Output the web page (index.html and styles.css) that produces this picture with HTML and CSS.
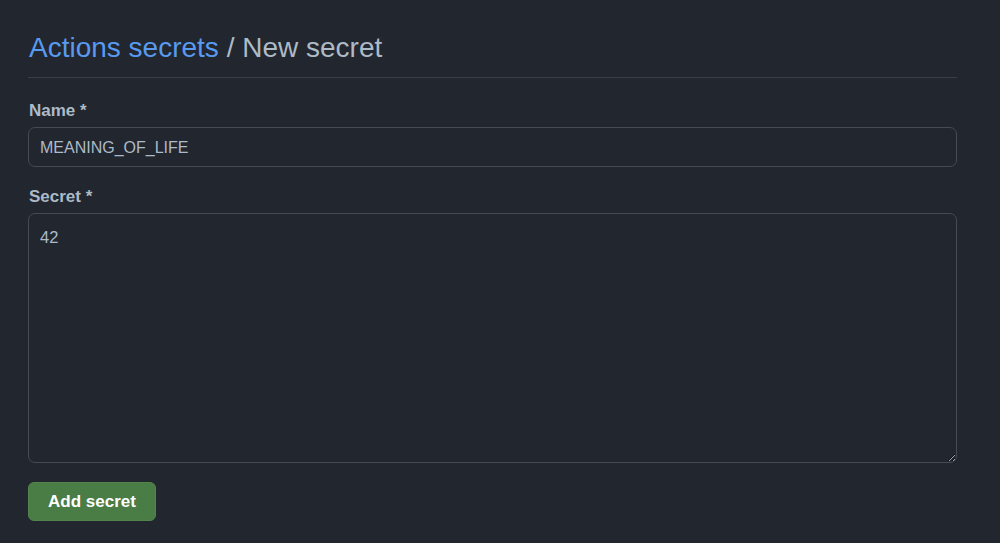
FILE: index.html
```html
<!DOCTYPE html>
<html>
<head>
<meta charset="utf-8">
<link rel="stylesheet" href="styles.css">
</head>
<body>
<main class="page">
  <h1 class="title"><a class="crumb" href="#">Actions secrets</a> / New secret</h1>
  <form class="form">
    <label class="label" for="name">Name *</label>
    <input class="field" id="name" type="text" value="MEANING_OF_LIFE">
    <label class="label label-secret" for="secret">Secret *</label>
    <textarea class="area" id="secret">42</textarea>
    <button class="btn" type="button">Add secret</button>
  </form>
</main>
</body>
</html>
```
FILE: styles.css
```css
html, body {
  margin: 0;
  background: #22262e;
  height: 100%;
}
body {
  font-family: "Liberation Sans", Arial, sans-serif;
  color: #adbac7;
}
.page {
  width: 929px;
  padding: 0 0 0 28px;
}
.title {
  margin: 0;
  padding: 30px 0 11px 1px;
  font-size: 28px;
  line-height: 36px;
  font-weight: 400;
  color: #adbac7;
  border-bottom: 1px solid #3a3f47;
}
.crumb {
  color: #589af0;
  text-decoration: none;
}
.form {
  display: flex;
  flex-direction: column;
  align-items: flex-start;
  padding-top: 23px;
}
.label {
  font-size: 17px;
  line-height: 20px;
  font-weight: 700;
  margin: 0 0 6px 1px;
  color: #adbac7;
}
.label-secret {
  margin-top: 20px;
}
.field, .area {
  box-sizing: border-box;
  width: 929px;
  background: #22262e;
  border: 1px solid #444b55;
  border-radius: 7px;
  color: #adbac7;
  font-family: "Liberation Sans", Arial, sans-serif;
  font-size: 16px;
  outline: none;
}
.field {
  height: 40px;
  padding: 2px 11px 0;
}
.area {
  height: 250px;
  padding: 13px 11px;
  line-height: 20px;
  font-size: 16.5px;
  resize: vertical;
}
.btn {
  margin-top: 19px;
  width: 128px;
  height: 39px;
  background: #4a7c45;
  border: 1px solid #52844d;
  border-radius: 6px;
  color: #ffffff;
  font-family: "Liberation Sans", Arial, sans-serif;
  font-size: 17px;
  font-weight: 700;
  padding: 0;
}
```
